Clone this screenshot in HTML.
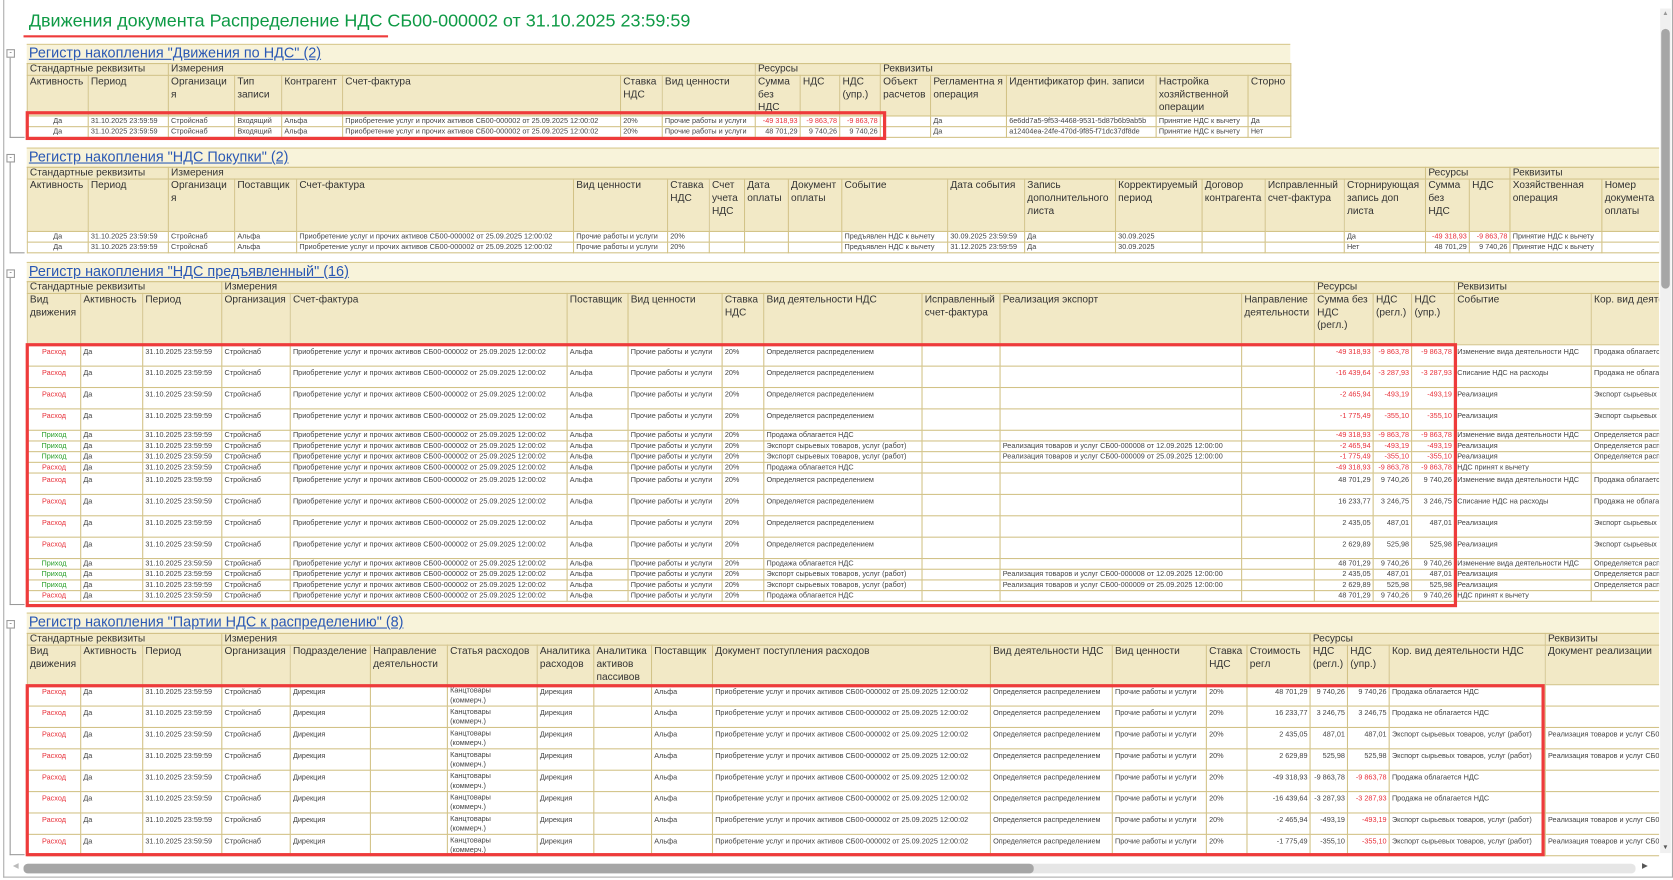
<!DOCTYPE html>
<html><head><meta charset="utf-8">
<style>
html,body{margin:0;padding:0;background:#fff;overflow:hidden;width:1673px;height:879px}
#w{position:absolute;left:0;top:0;width:1566px;height:823px;transform:scale(1.069);transform-origin:0 0;font-family:"Liberation Sans",Arial,sans-serif;color:#333}
.a{position:absolute}
.band{position:absolute;background:#f8f3da;border-top:1px solid #d8c98e;border-bottom:1px solid #d8c98e}
.band a{position:absolute;left:2px;top:0px;font-size:13.5px;color:#2a58b4;text-decoration:underline;white-space:nowrap}
.clip{position:absolute;overflow:hidden}
table{border-collapse:collapse;table-layout:fixed}
td{border:1px solid #d2c286;padding:0 2px;overflow:hidden;white-space:nowrap;vertical-align:top}
tr.g td{background:#f2e9c6;font-size:9.5px;line-height:10px;height:10px;color:#333}
tr.h td{background:#f2e9c6;font-size:9.5px;line-height:12px;white-space:normal;overflow-wrap:anywhere;color:#333}
tr.d td{background:#fff;font-size:6.8px;line-height:8px;color:#444;padding-top:1px}
tr.s td{height:8px}
tr.t td{height:16px;padding-top:3px}
tr.t td.k{line-height:9px;padding-top:1px;height:18px}
td.n{text-align:right}
.r{color:#e8303a!important}
.gr{color:#2aa02a!important}
td.c{text-align:center}
.box{position:absolute;border:3px solid #ee3b3b;box-sizing:border-box}
.tree{position:absolute;border-left:1px solid #999;border-bottom:1px solid #999;width:13px}
.pm{position:absolute;width:6px;height:6px;border:1px solid #999;background:#fff;font-size:7px;line-height:5px;text-align:center;color:#555}
</style></head><body><div id="w">
<div class="a" style="left:3px;top:0;width:1562px;height:821px;border:1px solid #aaa;border-top:none;box-sizing:border-box"></div>
<div class="a" style="left:27px;top:10px;font-size:16.8px;color:#0e9a45;white-space:nowrap">Движения документа Распределение НДС СБ00-000002 от 31.10.2025 23:59:59</div>
<div class="a" style="left:22px;top:33px;width:341px;height:2px;background:#ee3b3b"></div>

<div class="tree" style="left:9px;top:52px;height:76px"></div><div class="pm" style="left:6px;top:46px">-</div>
<div class="tree" style="left:9px;top:150px;height:86px"></div><div class="pm" style="left:6px;top:144px">-</div>
<div class="tree" style="left:9px;top:258px;height:307px"></div><div class="pm" style="left:6px;top:252px">-</div>
<div class="tree" style="left:9px;top:586px;height:213px"></div><div class="pm" style="left:6px;top:580px">-</div>

<!-- Section 1 -->
<div class="band" style="left:25px;top:41px;width:1182px;height:17px"><a>Регистр накопления "Движения по НДС" (2)</a></div>
<table class="a" style="left:25px;top:59px;width:1182px">
<colgroup><col style="width:57px"><col style="width:75px"><col style="width:62px"><col style="width:44px"><col style="width:57px"><col style="width:260px"><col style="width:39px"><col style="width:87px"><col style="width:42px"><col style="width:37px"><col style="width:38px"><col style="width:47px"><col style="width:71px"><col style="width:140px"><col style="width:86px"><col style="width:40px"></colgroup>
<tr class="g"><td colspan="2">Стандартные реквизиты</td><td colspan="6">Измерения</td><td colspan="3">Ресурсы</td><td colspan="5">Реквизиты</td></tr>
<tr class="h" style="height:38px"><td>Активность</td><td>Период</td><td>Организация</td><td>Тип записи</td><td>Контрагент</td><td>Счет-фактура</td><td>Ставка НДС</td><td>Вид ценности</td><td>Сумма без НДС</td><td>НДС</td><td>НДС (упр.)</td><td>Объект расчетов</td><td>Регламентна я операция</td><td>Идентификатор фин. записи</td><td>Настройка хозяйственной операции</td><td>Сторно</td></tr>
<tr class="d s"><td class="c">Да</td><td>31.10.2025 23:59:59</td><td>Стройснаб</td><td>Входящий</td><td>Альфа</td><td>Приобретение услуг и прочих активов СБ00-000002 от 25.09.2025 12:00:02</td><td>20%</td><td>Прочие работы и услуги</td><td class="n r">-49 318,93</td><td class="n r">-9 863,78</td><td class="n r">-9 863,78</td><td></td><td>Да</td><td>6e6dd7a5-9f53-4468-9531-5d87b6b9ab5b</td><td>Принятие НДС к вычету</td><td>Да</td></tr>
<tr class="d s"><td class="c">Да</td><td>31.10.2025 23:59:59</td><td>Стройснаб</td><td>Входящий</td><td>Альфа</td><td>Приобретение услуг и прочих активов СБ00-000002 от 25.09.2025 12:00:02</td><td>20%</td><td>Прочие работы и услуги</td><td class="n">48 701,29</td><td class="n">9 740,26</td><td class="n">9 740,26</td><td></td><td>Да</td><td>a12404ea-24fe-470d-9f85-f71dc37df8de</td><td>Принятие НДС к вычету</td><td>Нет</td></tr>
</table>
<div class="box" style="left:24px;top:104px;width:805px;height:27px"></div>

<!-- Section 2 -->
<div class="band" style="left:25px;top:138px;width:1527px;height:17px"><a>Регистр накопления "НДС Покупки" (2)</a></div>
<div class="clip" style="left:25px;top:156px;width:1527px;height:84px">
<table style="width:1527px">
<colgroup><col style="width:57px"><col style="width:75px"><col style="width:62px"><col style="width:58px"><col style="width:259px"><col style="width:88px"><col style="width:39px"><col style="width:33px"><col style="width:41px"><col style="width:50px"><col style="width:99px"><col style="width:72px"><col style="width:85px"><col style="width:81px"><col style="width:59px"><col style="width:74px"><col style="width:76px"><col style="width:41px"><col style="width:38px"><col style="width:86px"><col style="width:54px"></colgroup>
<tr class="g"><td colspan="2">Стандартные реквизиты</td><td colspan="15">Измерения</td><td colspan="2">Ресурсы</td><td colspan="2">Реквизиты</td></tr>
<tr class="h" style="height:49px"><td>Активность</td><td>Период</td><td>Организация</td><td>Поставщик</td><td>Счет-фактура</td><td>Вид ценности</td><td>Ставка НДС</td><td>Счет учета НДС</td><td>Дата оплаты</td><td>Документ оплаты</td><td>Событие</td><td>Дата события</td><td>Запись дополнительного листа</td><td>Корректируемый период</td><td>Договор контрагента</td><td>Исправленный счет-фактура</td><td>Сторнирующая запись доп листа</td><td>Сумма без НДС</td><td>НДС</td><td>Хозяйственная операция</td><td>Номер документа оплаты</td></tr>
<tr class="d s"><td class="c">Да</td><td>31.10.2025 23:59:59</td><td>Стройснаб</td><td>Альфа</td><td>Приобретение услуг и прочих активов СБ00-000002 от 25.09.2025 12:00:02</td><td>Прочие работы и услуги</td><td>20%</td><td></td><td></td><td></td><td>Предъявлен НДС к вычету</td><td>30.09.2025 23:59:59</td><td>Да</td><td>30.09.2025</td><td></td><td></td><td>Да</td><td class="n r">-49 318,93</td><td class="n r">-9 863,78</td><td>Принятие НДС к вычету</td><td></td></tr>
<tr class="d s"><td class="c">Да</td><td>31.10.2025 23:59:59</td><td>Стройснаб</td><td>Альфа</td><td>Приобретение услуг и прочих активов СБ00-000002 от 25.09.2025 12:00:02</td><td>Прочие работы и услуги</td><td>20%</td><td></td><td></td><td></td><td>Предъявлен НДС к вычету</td><td>31.12.2025 23:59:59</td><td>Да</td><td>30.09.2025</td><td></td><td></td><td>Нет</td><td class="n">48 701,29</td><td class="n">9 740,26</td><td>Принятие НДС к вычету</td><td></td></tr>
</table></div>

<!-- Section 3 -->
<div class="band" style="left:25px;top:245px;width:1527px;height:17px"><a>Регистр накопления "НДС предъявленный" (16)</a></div>
<div class="clip" style="left:25px;top:263px;width:1527px;height:305px">
<table style="width:1543px">
<colgroup><col style="width:50px"><col style="width:58px"><col style="width:74px"><col style="width:64px"><col style="width:259px"><col style="width:57px"><col style="width:88px"><col style="width:39px"><col style="width:148px"><col style="width:73px"><col style="width:226px"><col style="width:68px"><col style="width:55px"><col style="width:36px"><col style="width:40px"><col style="width:128px"><col style="width:80px"></colgroup>
<tr class="g"><td colspan="3">Стандартные реквизиты</td><td colspan="9">Измерения</td><td colspan="3">Ресурсы</td><td colspan="2">Реквизиты</td></tr>
<tr class="h" style="height:48px"><td>Вид движения</td><td>Активность</td><td>Период</td><td>Организация</td><td>Счет-фактура</td><td>Поставщик</td><td>Вид ценности</td><td>Ставка НДС</td><td>Вид деятельности НДС</td><td>Исправленный счет-фактура</td><td>Реализация экспорт</td><td>Направление деятельности</td><td>Сумма без НДС (регл.)</td><td>НДС (регл.)</td><td>НДС (упр.)</td><td>Событие</td><td style="white-space:nowrap">Кор. вид деятельности НДС</td></tr>
<tr class="d t"><td class="c r">Расход</td><td>Да</td><td>31.10.2025 23:59:59</td><td>Стройснаб</td><td>Приобретение услуг и прочих активов СБ00-000002 от 25.09.2025 12:00:02</td><td>Альфа</td><td>Прочие работы и услуги</td><td>20%</td><td>Определяется распределением</td><td></td><td></td><td></td><td class="n r">-49 318,93</td><td class="n r">-9 863,78</td><td class="n r">-9 863,78</td><td>Изменение вида деятельности НДС</td><td>Продажа облагается НДС</td></tr>
<tr class="d t"><td class="c r">Расход</td><td>Да</td><td>31.10.2025 23:59:59</td><td>Стройснаб</td><td>Приобретение услуг и прочих активов СБ00-000002 от 25.09.2025 12:00:02</td><td>Альфа</td><td>Прочие работы и услуги</td><td>20%</td><td>Определяется распределением</td><td></td><td></td><td></td><td class="n r">-16 439,64</td><td class="n r">-3 287,93</td><td class="n r">-3 287,93</td><td>Списание НДС на расходы</td><td>Продажа не облагается НДС</td></tr>
<tr class="d t"><td class="c r">Расход</td><td>Да</td><td>31.10.2025 23:59:59</td><td>Стройснаб</td><td>Приобретение услуг и прочих активов СБ00-000002 от 25.09.2025 12:00:02</td><td>Альфа</td><td>Прочие работы и услуги</td><td>20%</td><td>Определяется распределением</td><td></td><td></td><td></td><td class="n r">-2 465,94</td><td class="n r">-493,19</td><td class="n r">-493,19</td><td>Реализация</td><td>Экспорт сырьевых товаров</td></tr>
<tr class="d t"><td class="c r">Расход</td><td>Да</td><td>31.10.2025 23:59:59</td><td>Стройснаб</td><td>Приобретение услуг и прочих активов СБ00-000002 от 25.09.2025 12:00:02</td><td>Альфа</td><td>Прочие работы и услуги</td><td>20%</td><td>Определяется распределением</td><td></td><td></td><td></td><td class="n r">-1 775,49</td><td class="n r">-355,10</td><td class="n r">-355,10</td><td>Реализация</td><td>Экспорт сырьевых товаров</td></tr>
<tr class="d s"><td class="c gr">Приход</td><td>Да</td><td>31.10.2025 23:59:59</td><td>Стройснаб</td><td>Приобретение услуг и прочих активов СБ00-000002 от 25.09.2025 12:00:02</td><td>Альфа</td><td>Прочие работы и услуги</td><td>20%</td><td>Продажа облагается НДС</td><td></td><td></td><td></td><td class="n r">-49 318,93</td><td class="n r">-9 863,78</td><td class="n r">-9 863,78</td><td>Изменение вида деятельности НДС</td><td>Определяется распределением</td></tr>
<tr class="d s"><td class="c gr">Приход</td><td>Да</td><td>31.10.2025 23:59:59</td><td>Стройснаб</td><td>Приобретение услуг и прочих активов СБ00-000002 от 25.09.2025 12:00:02</td><td>Альфа</td><td>Прочие работы и услуги</td><td>20%</td><td>Экспорт сырьевых товаров, услуг (работ)</td><td></td><td>Реализация товаров и услуг СБ00-000008 от 12.09.2025 12:00:00</td><td></td><td class="n r">-2 465,94</td><td class="n r">-493,19</td><td class="n r">-493,19</td><td>Реализация</td><td>Определяется распределением</td></tr>
<tr class="d s"><td class="c gr">Приход</td><td>Да</td><td>31.10.2025 23:59:59</td><td>Стройснаб</td><td>Приобретение услуг и прочих активов СБ00-000002 от 25.09.2025 12:00:02</td><td>Альфа</td><td>Прочие работы и услуги</td><td>20%</td><td>Экспорт сырьевых товаров, услуг (работ)</td><td></td><td>Реализация товаров и услуг СБ00-000009 от 25.09.2025 12:00:00</td><td></td><td class="n r">-1 775,49</td><td class="n r">-355,10</td><td class="n r">-355,10</td><td>Реализация</td><td>Определяется распределением</td></tr>
<tr class="d s"><td class="c r">Расход</td><td>Да</td><td>31.10.2025 23:59:59</td><td>Стройснаб</td><td>Приобретение услуг и прочих активов СБ00-000002 от 25.09.2025 12:00:02</td><td>Альфа</td><td>Прочие работы и услуги</td><td>20%</td><td>Продажа облагается НДС</td><td></td><td></td><td></td><td class="n r">-49 318,93</td><td class="n r">-9 863,78</td><td class="n r">-9 863,78</td><td>НДС принят к вычету</td><td></td></tr>
<tr class="d t"><td class="c r">Расход</td><td>Да</td><td>31.10.2025 23:59:59</td><td>Стройснаб</td><td>Приобретение услуг и прочих активов СБ00-000002 от 25.09.2025 12:00:02</td><td>Альфа</td><td>Прочие работы и услуги</td><td>20%</td><td>Определяется распределением</td><td></td><td></td><td></td><td class="n">48 701,29</td><td class="n">9 740,26</td><td class="n">9 740,26</td><td>Изменение вида деятельности НДС</td><td>Продажа облагается НДС</td></tr>
<tr class="d t"><td class="c r">Расход</td><td>Да</td><td>31.10.2025 23:59:59</td><td>Стройснаб</td><td>Приобретение услуг и прочих активов СБ00-000002 от 25.09.2025 12:00:02</td><td>Альфа</td><td>Прочие работы и услуги</td><td>20%</td><td>Определяется распределением</td><td></td><td></td><td></td><td class="n">16 233,77</td><td class="n">3 246,75</td><td class="n">3 246,75</td><td>Списание НДС на расходы</td><td>Продажа не облагается НДС</td></tr>
<tr class="d t"><td class="c r">Расход</td><td>Да</td><td>31.10.2025 23:59:59</td><td>Стройснаб</td><td>Приобретение услуг и прочих активов СБ00-000002 от 25.09.2025 12:00:02</td><td>Альфа</td><td>Прочие работы и услуги</td><td>20%</td><td>Определяется распределением</td><td></td><td></td><td></td><td class="n">2 435,05</td><td class="n">487,01</td><td class="n">487,01</td><td>Реализация</td><td>Экспорт сырьевых товаров</td></tr>
<tr class="d t"><td class="c r">Расход</td><td>Да</td><td>31.10.2025 23:59:59</td><td>Стройснаб</td><td>Приобретение услуг и прочих активов СБ00-000002 от 25.09.2025 12:00:02</td><td>Альфа</td><td>Прочие работы и услуги</td><td>20%</td><td>Определяется распределением</td><td></td><td></td><td></td><td class="n">2 629,89</td><td class="n">525,98</td><td class="n">525,98</td><td>Реализация</td><td>Экспорт сырьевых товаров</td></tr>
<tr class="d s"><td class="c gr">Приход</td><td>Да</td><td>31.10.2025 23:59:59</td><td>Стройснаб</td><td>Приобретение услуг и прочих активов СБ00-000002 от 25.09.2025 12:00:02</td><td>Альфа</td><td>Прочие работы и услуги</td><td>20%</td><td>Продажа облагается НДС</td><td></td><td></td><td></td><td class="n">48 701,29</td><td class="n">9 740,26</td><td class="n">9 740,26</td><td>Изменение вида деятельности НДС</td><td>Определяется распределением</td></tr>
<tr class="d s"><td class="c gr">Приход</td><td>Да</td><td>31.10.2025 23:59:59</td><td>Стройснаб</td><td>Приобретение услуг и прочих активов СБ00-000002 от 25.09.2025 12:00:02</td><td>Альфа</td><td>Прочие работы и услуги</td><td>20%</td><td>Экспорт сырьевых товаров, услуг (работ)</td><td></td><td>Реализация товаров и услуг СБ00-000008 от 12.09.2025 12:00:00</td><td></td><td class="n">2 435,05</td><td class="n">487,01</td><td class="n">487,01</td><td>Реализация</td><td>Определяется распределением</td></tr>
<tr class="d s"><td class="c gr">Приход</td><td>Да</td><td>31.10.2025 23:59:59</td><td>Стройснаб</td><td>Приобретение услуг и прочих активов СБ00-000002 от 25.09.2025 12:00:02</td><td>Альфа</td><td>Прочие работы и услуги</td><td>20%</td><td>Экспорт сырьевых товаров, услуг (работ)</td><td></td><td>Реализация товаров и услуг СБ00-000009 от 25.09.2025 12:00:00</td><td></td><td class="n">2 629,89</td><td class="n">525,98</td><td class="n">525,98</td><td>Реализация</td><td>Определяется распределением</td></tr>
<tr class="d s"><td class="c r">Расход</td><td>Да</td><td>31.10.2025 23:59:59</td><td>Стройснаб</td><td>Приобретение услуг и прочих активов СБ00-000002 от 25.09.2025 12:00:02</td><td>Альфа</td><td>Прочие работы и услуги</td><td>20%</td><td>Продажа облагается НДС</td><td></td><td></td><td></td><td class="n">48 701,29</td><td class="n">9 740,26</td><td class="n">9 740,26</td><td>НДС принят к вычету</td><td></td></tr>
</table></div>
<div class="box" style="left:24px;top:321px;width:1339px;height:247px"></div>

<!-- Section 4 -->
<div class="band" style="left:25px;top:573px;width:1527px;height:18px"><a>Регистр накопления "Партии НДС к распределению" (8)</a></div>
<div class="clip" style="left:25px;top:592px;width:1527px;height:210px">
<table style="width:1530px">
<colgroup><col style="width:50px"><col style="width:58px"><col style="width:74px"><col style="width:64px"><col style="width:75px"><col style="width:72px"><col style="width:84px"><col style="width:53px"><col style="width:54px"><col style="width:57px"><col style="width:260px"><col style="width:114px"><col style="width:88px"><col style="width:38px"><col style="width:59px"><col style="width:35px"><col style="width:39px"><col style="width:146px"><col style="width:110px"></colgroup>
<tr class="g"><td colspan="3">Стандартные реквизиты</td><td colspan="12">Измерения</td><td colspan="3">Ресурсы</td><td colspan="2">Реквизиты</td></tr>
<tr class="h" style="height:37px"><td>Вид движения</td><td>Активность</td><td>Период</td><td>Организация</td><td>Подразделение</td><td>Направление деятельности</td><td>Статья расходов</td><td>Аналитика расходов</td><td>Аналитика активов пассивов</td><td>Поставщик</td><td>Документ поступления расходов</td><td>Вид деятельности НДС</td><td>Вид ценности</td><td>Ставка НДС</td><td>Стоимость регл</td><td>НДС (регл.)</td><td>НДС (упр.)</td><td>Кор. вид деятельности НДС</td><td>Документ реализации</td></tr>
<tr class="d t"><td class="c r">Расход</td><td>Да</td><td>31.10.2025 23:59:59</td><td>Стройснаб</td><td>Дирекция</td><td></td><td class="k">Канцтовары<br>(коммерч.)</td><td>Дирекция</td><td></td><td>Альфа</td><td>Приобретение услуг и прочих активов СБ00-000002 от 25.09.2025 12:00:02</td><td>Определяется распределением</td><td>Прочие работы и услуги</td><td>20%</td><td class="n">48 701,29</td><td class="n">9 740,26</td><td class="n">9 740,26</td><td>Продажа облагается НДС</td><td></td></tr>
<tr class="d t"><td class="c r">Расход</td><td>Да</td><td>31.10.2025 23:59:59</td><td>Стройснаб</td><td>Дирекция</td><td></td><td class="k">Канцтовары<br>(коммерч.)</td><td>Дирекция</td><td></td><td>Альфа</td><td>Приобретение услуг и прочих активов СБ00-000002 от 25.09.2025 12:00:02</td><td>Определяется распределением</td><td>Прочие работы и услуги</td><td>20%</td><td class="n">16 233,77</td><td class="n">3 246,75</td><td class="n">3 246,75</td><td>Продажа не облагается НДС</td><td></td></tr>
<tr class="d t"><td class="c r">Расход</td><td>Да</td><td>31.10.2025 23:59:59</td><td>Стройснаб</td><td>Дирекция</td><td></td><td class="k">Канцтовары<br>(коммерч.)</td><td>Дирекция</td><td></td><td>Альфа</td><td>Приобретение услуг и прочих активов СБ00-000002 от 25.09.2025 12:00:02</td><td>Определяется распределением</td><td>Прочие работы и услуги</td><td>20%</td><td class="n">2 435,05</td><td class="n">487,01</td><td class="n">487,01</td><td>Экспорт сырьевых товаров, услуг (работ)</td><td>Реализация товаров и услуг СБ00</td></tr>
<tr class="d t"><td class="c r">Расход</td><td>Да</td><td>31.10.2025 23:59:59</td><td>Стройснаб</td><td>Дирекция</td><td></td><td class="k">Канцтовары<br>(коммерч.)</td><td>Дирекция</td><td></td><td>Альфа</td><td>Приобретение услуг и прочих активов СБ00-000002 от 25.09.2025 12:00:02</td><td>Определяется распределением</td><td>Прочие работы и услуги</td><td>20%</td><td class="n">2 629,89</td><td class="n">525,98</td><td class="n">525,98</td><td>Экспорт сырьевых товаров, услуг (работ)</td><td>Реализация товаров и услуг СБ00</td></tr>
<tr class="d t"><td class="c r">Расход</td><td>Да</td><td>31.10.2025 23:59:59</td><td>Стройснаб</td><td>Дирекция</td><td></td><td class="k">Канцтовары<br>(коммерч.)</td><td>Дирекция</td><td></td><td>Альфа</td><td>Приобретение услуг и прочих активов СБ00-000002 от 25.09.2025 12:00:02</td><td>Определяется распределением</td><td>Прочие работы и услуги</td><td>20%</td><td class="n">-49 318,93</td><td class="n">-9 863,78</td><td class="n r">-9 863,78</td><td>Продажа облагается НДС</td><td></td></tr>
<tr class="d t"><td class="c r">Расход</td><td>Да</td><td>31.10.2025 23:59:59</td><td>Стройснаб</td><td>Дирекция</td><td></td><td class="k">Канцтовары<br>(коммерч.)</td><td>Дирекция</td><td></td><td>Альфа</td><td>Приобретение услуг и прочих активов СБ00-000002 от 25.09.2025 12:00:02</td><td>Определяется распределением</td><td>Прочие работы и услуги</td><td>20%</td><td class="n">-16 439,64</td><td class="n">-3 287,93</td><td class="n r">-3 287,93</td><td>Продажа не облагается НДС</td><td></td></tr>
<tr class="d t"><td class="c r">Расход</td><td>Да</td><td>31.10.2025 23:59:59</td><td>Стройснаб</td><td>Дирекция</td><td></td><td class="k">Канцтовары<br>(коммерч.)</td><td>Дирекция</td><td></td><td>Альфа</td><td>Приобретение услуг и прочих активов СБ00-000002 от 25.09.2025 12:00:02</td><td>Определяется распределением</td><td>Прочие работы и услуги</td><td>20%</td><td class="n">-2 465,94</td><td class="n">-493,19</td><td class="n r">-493,19</td><td>Экспорт сырьевых товаров, услуг (работ)</td><td>Реализация товаров и услуг СБ00</td></tr>
<tr class="d t"><td class="c r">Расход</td><td>Да</td><td>31.10.2025 23:59:59</td><td>Стройснаб</td><td>Дирекция</td><td></td><td class="k">Канцтовары<br>(коммерч.)</td><td>Дирекция</td><td></td><td>Альфа</td><td>Приобретение услуг и прочих активов СБ00-000002 от 25.09.2025 12:00:02</td><td>Определяется распределением</td><td>Прочие работы и услуги</td><td>20%</td><td class="n">-1 775,49</td><td class="n">-355,10</td><td class="n r">-355,10</td><td>Экспорт сырьевых товаров, услуг (работ)</td><td>Реализация товаров и услуг СБ00</td></tr>
</table></div>
<div class="box" style="left:24px;top:640px;width:1421px;height:161px"></div>

<div class="a" style="left:1553px;top:8px;width:10px;height:790px;background:#f0f0f0"></div>
<div class="a" style="left:1554px;top:27px;width:8px;height:243px;background:#a6a6a6;border-radius:4px"></div>
<div class="a" style="left:1555px;top:10px;font-size:6px;color:#999">▲</div>
<div class="a" style="left:1555px;top:790px;font-size:6px;color:#555">▼</div>
<div class="a" style="left:22px;top:808px;width:1508px;height:9px;background:#e6e6e6;border-radius:4px"></div>
<div class="a" style="left:22px;top:808px;width:945px;height:9px;background:#a6a6a6;border-radius:4px"></div>
<div class="a" style="left:12px;top:806px;font-size:7px;color:#bbb">◀</div>
<div class="a" style="left:1536px;top:806px;font-size:7px;color:#555">▶</div>
</div></body></html>
